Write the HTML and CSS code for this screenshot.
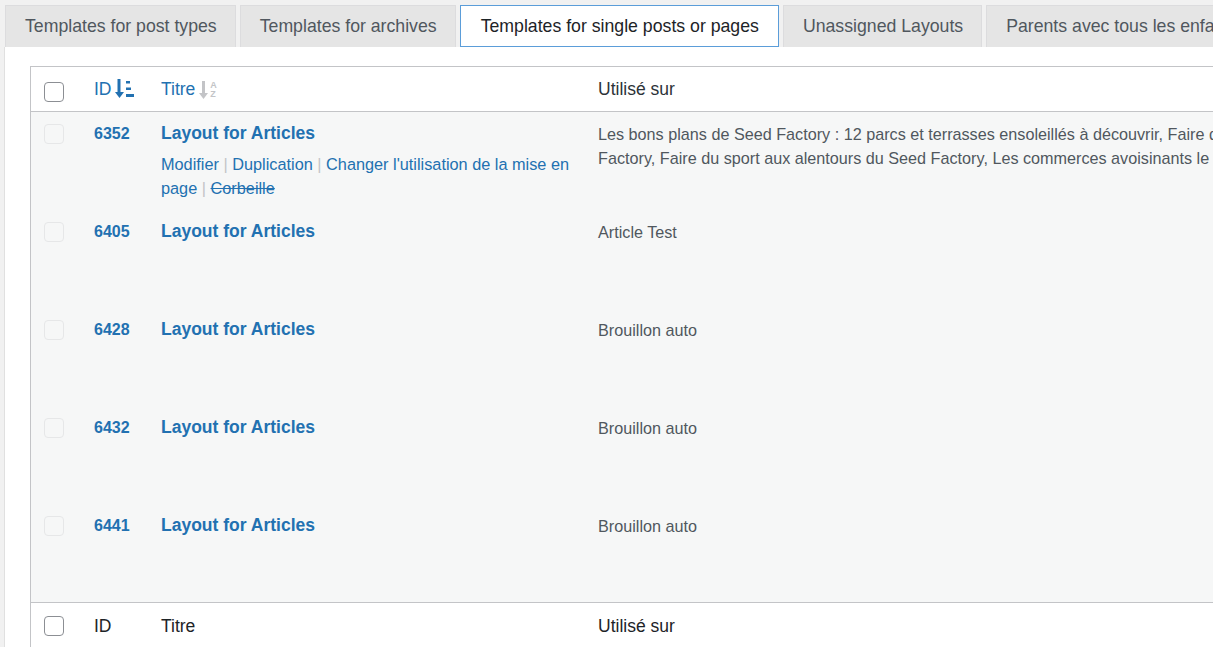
FILE: index.html
```html
<!DOCTYPE html>
<html lang="fr">
<head>
<meta charset="utf-8">
<title>Layouts</title>
<link rel="stylesheet" href="styles.css">
</head>
<body>
<div class="page">
  <nav class="tabs">
    <a class="tab">Templates for post types</a>
    <a class="tab">Templates for archives</a>
    <a class="tab active">Templates for single posts or pages</a>
    <a class="tab">Unassigned Layouts</a>
    <a class="tab">Parents avec tous les enfants</a>
  </nav>
  <div class="panel">
    <table class="list">
      <colgroup>
        <col class="c-cb"><col class="c-id"><col class="c-title"><col class="c-used">
      </colgroup>
      <thead>
        <tr>
          <th class="cb"><span class="box"></span></th>
          <th><a class="sort">ID <svg class="ico" width="20" height="22" viewBox="0 0 20 22"><path d="M4 1v15" stroke="#2271b1" stroke-width="3"/><path d="M0 14l4.5 6 4.5-6z" fill="#2271b1"/><rect x="11" y="3" width="4" height="2.5" fill="#2271b1"/><rect x="11" y="9.5" width="5" height="2.5" fill="#2271b1"/><rect x="11" y="16" width="8" height="3" fill="#2271b1"/></svg></a></th>
          <th><a class="sort">Titre <span class="az"><svg class="ico" width="10" height="22" viewBox="0 0 10 22"><path d="M4.5 2v14" stroke="#c3c4c7" stroke-width="3"/><path d="M0 14l4.5 6 4.5-6z" fill="#c3c4c7"/></svg><span class="letters"><span>A</span><span>Z</span></span></span></a></th>
          <th class="plain">Utilisé sur</th>
        </tr>
      </thead>
      <tbody>
        <tr>
          <td class="cb"><span class="box off"></span></td>
          <td class="id">6352</td>
          <td class="title">
            <a class="row-title">Layout for Articles</a>
            <div class="actions"><a>Modifier</a> <span class="sep">|</span> <a>Duplication</a> <span class="sep">|</span> <a>Changer l'utilisation de la mise en page</a> <span class="sep">|</span> <a class="trash">Corbeille</a></div>
          </td>
          <td class="used">Les bons plans de Seed Factory : 12 parcs et terrasses ensoleillés à découvrir, Faire du shopping autour du Seed Factory, Faire du sport aux alentours du Seed Factory, Les commerces avoisinants le Seed Factory</td>
        </tr>
        <tr>
          <td class="cb"><span class="box off"></span></td>
          <td class="id">6405</td>
          <td class="title"><a class="row-title">Layout for Articles</a></td>
          <td class="used">Article Test</td>
        </tr>
        <tr>
          <td class="cb"><span class="box off"></span></td>
          <td class="id">6428</td>
          <td class="title"><a class="row-title">Layout for Articles</a></td>
          <td class="used">Brouillon auto</td>
        </tr>
        <tr>
          <td class="cb"><span class="box off"></span></td>
          <td class="id">6432</td>
          <td class="title"><a class="row-title">Layout for Articles</a></td>
          <td class="used">Brouillon auto</td>
        </tr>
        <tr>
          <td class="cb"><span class="box off"></span></td>
          <td class="id">6441</td>
          <td class="title"><a class="row-title">Layout for Articles</a></td>
          <td class="used">Brouillon auto</td>
        </tr>
      </tbody>
      <tfoot>
        <tr>
          <td class="cb"><span class="box"></span></td>
          <td>ID</td>
          <td>Titre</td>
          <td>Utilisé sur</td>
        </tr>
      </tfoot>
    </table>
  </div>
</div>
</body>
</html>
```
FILE: styles.css
```css
html, body {
  margin: 0;
  padding: 0;
  background: #f1f1f1;
  overflow: hidden;
  font-family: "Liberation Sans", Arial, sans-serif;
  color: #50575e;
}
.page {
  padding-top: 5px;
  width: 1700px;
}
.tabs {
  display: flex;
  gap: 4px;
  margin-left: 5px;
  height: 42px;
}
.tab {
  box-sizing: border-box;
  height: 42px;
  display: flex;
  align-items: center;
  padding: 0 18px 0 19px;
  background: #e5e5e5;
  border: 1px solid #dcdcde;
  border-bottom: none;
  font-size: 17.7px;
  color: #50575e;
  white-space: nowrap;
}
.tab.active {
  background: #fff;
  border: 1px solid #5b9dd9;
  padding: 0 19px 0 20px;
  color: #1d2327;
}
.panel {
  margin-left: 4px;
  background: #fff;
  border-left: 1px solid #e0e0e0;
  padding: 19px 0 0 25px;
  height: 700px;
}
.list {
  table-layout: fixed;
  width: 1400px;
  border-collapse: separate;
  border-spacing: 0;
  border: 1px solid #c3c4c7;
  border-right: none;
}
.c-cb { width: 54px; }
.c-id { width: 66px; }
.c-title { width: 437px; }
th, td {
  padding: 0 10px;
  text-align: left;
  font-weight: normal;
}
th {
  height: 44px;
  border-bottom: 1px solid #c3c4c7;
  vertical-align: middle;
  font-size: 17.5px;
  color: #2c3338;
  background: #fff;
}
th:nth-child(2) { padding-left: 9px; }
th.cb, td.cb { padding-left: 13px; padding-right: 0; }
.box {
  display: block;
  box-sizing: border-box;
  width: 20px;
  height: 20px;
  border: 1px solid #8c8f94;
  border-radius: 4px;
  background: #fff;
}
th .box { margin-top: 5px; }
.box.off {
  border-color: #e6e7e8;
  background: #f6f7f7;
}
.sort {
  color: #2271b1;
  display: inline-flex;
  align-items: center;
  gap: 3px;
}
.ico { display: block; }
.az {
  display: inline-flex;
  align-items: center;
  gap: 1px;
  margin-top: 2px;
  margin-left: 1px;
}
.letters {
  display: flex;
  flex-direction: column;
  font-size: 9px;
  font-weight: bold;
  line-height: 9px;
  color: #c3c4c7;
}
tbody tr { height: 98px; }
tbody td {
  background: #f6f7f7;
  vertical-align: top;
  font-size: 16.2px;
  line-height: 24px;
}
tbody td.cb { padding-top: 12px; }
tbody td.id {
  padding-top: 10px;
  font-weight: bold;
  font-size: 16px;
  color: #2271b1;
}
tbody td.id { padding-left: 9px; }
tbody td.title { padding-top: 9px; }
.row-title {
  display: block;
  font-size: 17.5px;
  font-weight: bold;
  color: #2271b1;
  line-height: 24px;
  margin-bottom: 7px;
}
.actions { color: #2271b1; font-size: 16.3px; }
.actions a { color: #2271b1; }
.actions .sep { color: #c3c4c7; }
.actions .trash { text-decoration: line-through; }
tbody td.used {
  padding-top: 10px;
  color: #50575e;
}
tfoot td {
  border-top: 1px solid #c3c4c7;
  height: 44px;
  padding-top: 13px;
  vertical-align: top;
  font-size: 17.5px;
  color: #1d2327;
  background: #fff;
  line-height: 20px;
}
tfoot td:nth-child(2) { padding-left: 9px; }
```
